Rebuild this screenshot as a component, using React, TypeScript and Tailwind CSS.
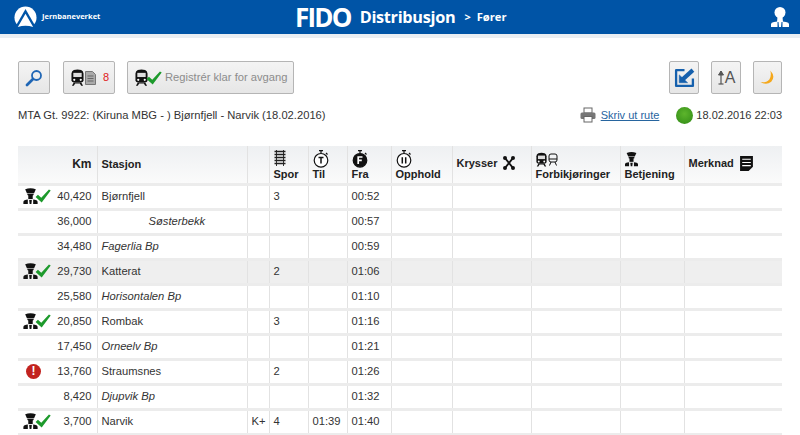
import React from "react";

const Check = ({ className = "" }: { className?: string }) => (
  <svg viewBox="0 0 18 16" className={className}>
    <path d="M0.5 9 L3.2 6.5 L7 10 L15.8 0.5 L17.8 1.8 L7.5 15.5 Z" fill="#1d9a2c" />
  </svg>
);

const Conductor = ({ className = "" }: { className?: string }) => (
  <svg viewBox="0 0 16 18" className={className} fill="#111">
    <path d="M2 1.5 Q8 -1 14 1.5 L12 6 L4 6 Z" />
    <path d="M4.5 6.5 H11.5 V8 Q8 10 4.5 8 Z" />
    <rect x="5.5" y="8" width="5" height="4.5" />
    <path d="M0 18 V15.5 Q0 13.5 3 13.2 L5 13 V18 Z" />
    <path d="M6.5 13.5 H9.5 L9 18 H7 Z" />
    <path d="M16 18 V15.5 Q16 13.5 13 13.2 L11 13 V18 Z" />
  </svg>
);

const Train = ({ className = "", fill = "#111" }: { className?: string; fill?: string }) => (
  <svg viewBox="0 0 14 18" className={className}>
    <path d="M3 1 Q7 -0.5 11 1 Q13.5 2 13.5 5 V12 Q13.5 14 11 14.5 H3 Q0.5 14 0.5 12 V5 Q0.5 2 3 1 Z" fill={fill} />
    <path d="M2.5 4 H11.5 V8.5 H2.5 Z" fill="#ddd" />
    <circle cx="3.5" cy="11.5" r="1.2" fill="#fff" />
    <circle cx="10.5" cy="11.5" r="1.2" fill="#fff" />
    <path d="M3 14.5 L1 18 H3 L4.5 15.5 H9.5 L11 18 H13 L11 14.5 Z" fill={fill} />
  </svg>
);

const Stopwatch = ({ letter, solid = false }: { letter: string; solid?: boolean }) => (
  <svg viewBox="0 0 16 18" className="h-[18px] w-4">
    <path d="M6 0.6 H10 M8 0.6 V3 M13 3 L14.5 4.5" stroke="#111" strokeWidth="1.2" fill="none" />
    <circle cx="8" cy="10.3" r="6.8" fill={solid ? "#111" : "#fff"} stroke="#111" strokeWidth="1.2" />
    {letter === "T" && <path d="M5.5 7.5 H10.5 M8 7.5 V13.5" stroke="#111" strokeWidth="1.5" />}
    {letter === "F" && <path d="M6.2 14 V7 H10.5 M6.2 10.3 H9.8" stroke="#fff" strokeWidth="1.7" fill="none" />}
    {letter === "II" && <path d="M6.3 7.2 V13.4 M9.7 7.2 V13.4" stroke="#111" strokeWidth="1.5" />}
  </svg>
);

const Track = () => (
  <svg viewBox="0 0 12 16" className="h-[16px] w-[12px]">
    <path d="M2.5 0 V16 M9.5 0 V16" stroke="#333" strokeWidth="1" />
    <path d="M0.5 1.5 H11.5 M0.5 4.5 H11.5 M0.5 7.5 H11.5 M0.5 10.5 H11.5 M0.5 13.5 H11.5" stroke="#222" strokeWidth="1.3" />
  </svg>
);

const ConductorCheck = () => (
  <div className="flex items-end">
    <Conductor className="h-[16px] w-[15px]" />
    <Check className="-ml-[3px] mb-[1px] h-[14px] w-[16px]" />
  </div>
);

const Alert = () => (
  <div className="flex h-[15px] w-[15px] items-center justify-center rounded-full bg-[#c2231f] text-[12px] font-bold leading-none text-white">
    !
  </div>
);

function ToolButton({ className = "", children }: { className?: string; children: React.ReactNode }) {
  return (
    <button className={`flex h-[33px] items-center rounded-[2px] border border-[#b5b5b5] bg-gradient-to-b from-[#f4f4f4] to-[#e6e6e6] ${className}`}>
      {children}
    </button>
  );
}

interface Row {
  icon?: "check" | "alert";
  km: string;
  name: string;
  stop?: boolean;
  indent?: boolean;
  k?: string;
  spor?: string;
  til?: string;
  fra: string;
  shaded?: boolean;
}

const rows: Row[] = [
  { icon: "check", km: "40,420", name: "Bjørnfjell", stop: true, spor: "3", fra: "00:52" },
  { km: "36,000", name: "Søsterbekk", indent: true, fra: "00:57" },
  { km: "34,480", name: "Fagerlia Bp", fra: "00:59" },
  { icon: "check", km: "29,730", name: "Katterat", stop: true, spor: "2", fra: "01:06", shaded: true },
  { km: "25,580", name: "Horisontalen Bp", fra: "01:10" },
  { icon: "check", km: "20,850", name: "Rombak", stop: true, spor: "3", fra: "01:16" },
  { km: "17,450", name: "Orneelv Bp", fra: "01:21" },
  { icon: "alert", km: "13,760", name: "Straumsnes", stop: true, spor: "2", fra: "01:26" },
  { km: "8,420", name: "Djupvik Bp", fra: "01:32" },
  { icon: "check", km: "3,700", name: "Narvik", stop: true, k: "K+", spor: "4", til: "01:39", fra: "01:40" },
];

const cell = "border-r border-b-[3px] border-r-[#e2e2e2] border-b-[#ececec] px-[4px] align-middle";
const headCell = "border-r border-b-[3px] border-r-[#e2e2e2] border-b-[#ececec] px-[4px] pt-[4px] text-[11px] font-bold leading-[13px] text-[#222]";

export default function App() {
  return (
    <div className="h-[435px] w-[800px] overflow-hidden bg-white font-['Liberation_Sans',Arial,sans-serif] text-[11.2px] text-[#333]">
      <header className="flex h-[38px] items-center border-b-4 border-b-[#e9eef3] bg-[#0054a6] text-white">
        <div className="ml-[14px] flex w-[281px] items-center gap-[5px]">
          <svg viewBox="0 0 24 24" className="h-[23px] w-[23px]">
            <circle cx="12" cy="12" r="11.5" fill="#fff" />
            <path d="M12 3 L24 24 H0 Z" fill="#0054a6" />
            <path d="M12 8 L20 22 Q12 19 4 22 Z" fill="#fff" />
          </svg>
          <span className="font-['Open_Sans',sans-serif] text-[7.5px] font-bold">Jernbaneverket</span>
        </div>
        <span className="font-['Open_Sans',sans-serif] text-[26px] font-bold leading-none tracking-[-1.8px]">FIDO</span>
        <span className="ml-[9px] font-['Open_Sans',sans-serif] text-[16.3px] font-bold leading-none tracking-[-0.3px]">Distribusjon</span>
        <span className="ml-[9px] font-['Open_Sans',sans-serif] text-[11px] font-bold">&gt;</span>
        <span className="ml-[6px] font-['Open_Sans',sans-serif] text-[11.2px] font-bold">Fører</span>
        <svg viewBox="0 0 18 20" className="ml-auto mr-[11px] h-[20px] w-[18px]" fill="#fff">
          <circle cx="9" cy="5.5" r="5.5" />
          <path d="M6.5 10 H11.5 L12 15 H6 Z" />
          <path d="M0 20 V17 Q0 15.5 3 15 L6.5 14.5 V20 Z" />
          <path d="M7.5 15 H10.5 L10 20 H8 Z" />
          <path d="M18 20 V17 Q18 15.5 15 15 L11.5 14.5 V20 Z" />
        </svg>
      </header>

      <main className="px-[18px]">
        <div className="flex items-center pt-[23px]">
          <ToolButton className="w-[32px] justify-center">
            <svg viewBox="0 0 18 18" className="h-[18px] w-[18px]" fill="none" stroke="#1f66b5">
              <circle cx="11.5" cy="6.5" r="4.5" strokeWidth="1.8" />
              <path d="M8 10 L2 16" strokeWidth="2.8" strokeLinecap="round" />
            </svg>
          </ToolButton>
          <ToolButton className="ml-[13px] w-[52px] pl-[7px]">
            <Train className="h-[17px] w-[13px]" />
            <svg viewBox="0 0 11 14" className="ml-[1px] h-[14px] w-[11px]">
              <path d="M0.5 0.5 H7.5 L10.5 3.5 V13.5 H0.5 Z" fill="#aaa" stroke="#777" />
              <path d="M2.5 5 H8.5 M2.5 7.5 H8.5 M2.5 10 H8.5" stroke="#666" />
            </svg>
            <span className="ml-[7px] text-[11px] text-[#e02020]">8</span>
          </ToolButton>
          <ToolButton className="ml-[12px] w-[167px] pl-[7px]">
            <Train className="h-[17px] w-[13px]" />
            <Check className="-ml-[2px] h-[14px] w-[16px]" />
            <span className="ml-[3px] whitespace-nowrap text-[11.2px] text-[#8c8c8c]">Registrér klar for avgang</span>
          </ToolButton>
          <ToolButton className="ml-auto w-[30px] justify-center">
            <svg viewBox="0 0 20 20" className="h-[21px] w-[21px]" fill="none" stroke="#1560ad">
              <path d="M10 3 H2 V18 H18 V11" strokeWidth="2.2" strokeLinejoin="round" />
              <path d="M18 3 L8 12" strokeWidth="4" />
              <path d="M5 7.5 V15 H13 Z" fill="#1560ad" strokeWidth="0.5" />
            </svg>
          </ToolButton>
          <ToolButton className="ml-[12px] w-[30px] justify-center">
            <svg viewBox="0 0 8 15" className="h-[15px] w-[8px]" fill="none" stroke="#555">
              <path d="M4 1 V14" strokeWidth="1.2" />
              <path d="M1.5 5 L4 1 L6.5 5 Z" fill="#555" />
              <path d="M1.5 14 H6.5" strokeWidth="1.2" />
            </svg>
            <span className="text-[16px] leading-none text-[#555]">A</span>
          </ToolButton>
          <ToolButton className="ml-[12px] w-[29px] justify-center">
            <svg viewBox="0 0 16 16" className="h-[15px] w-[15px]">
              <path d="M11 0.5 Q17 7 12 12.5 Q7 16.5 0.5 13 Q7 13.5 10 10 Q12.5 6 11 0.5 Z" fill="#f5a81c" />
            </svg>
          </ToolButton>
        </div>

        <div className="mt-[12px] flex h-[18px] items-center">
          <span>MTA Gt. 9922: (Kiruna MBG - ) Bjørnfjell - Narvik (18.02.2016)</span>
          <svg viewBox="0 0 16 16" className="ml-auto h-[16px] w-[16px]">
            <rect x="4" y="1" width="8" height="5" fill="#fff" stroke="#666" />
            <rect x="0.5" y="5.5" width="15" height="6.5" rx="1.5" fill="#777" />
            <rect x="4" y="9.5" width="8" height="5.5" fill="#fff" stroke="#666" />
          </svg>
          <a className="ml-[5px] text-[11px] text-[#27659f] underline">Skriv ut rute</a>
          <span className="ml-[17px] h-[17px] w-[17px] rounded-full bg-[radial-gradient(circle_at_50%_40%,#5db52c,#2f8a16)]" />
          <span className="ml-[3px] text-[11px]">18.02.2016 22:03</span>
        </div>

        <table className="mt-[22px] w-[764px] table-fixed border-collapse">
          <colgroup>
            <col className="w-[79px]" />
            <col className="w-[150px]" />
            <col className="w-[22px]" />
            <col className="w-[39px]" />
            <col className="w-[39px]" />
            <col className="w-[44px]" />
            <col className="w-[61px]" />
            <col className="w-[79px]" />
            <col className="w-[89px]" />
            <col className="w-[64px]" />
            <col />
          </colgroup>
          <thead>
            <tr className="h-[38px] bg-gradient-to-b from-[#eef0f2] to-[#fbfbfb] align-top">
              <th className={`${headCell} !px-[5px] !pt-0 !align-middle !text-right !text-[12px]`}>Km</th>
              <th className={`${headCell} !pt-0 !align-middle text-left`}>Stasjon</th>
              <th className={headCell} />
              <th className={`${headCell} text-left`}>
                <Track />
                <div className="mt-[2px]">Spor</div>
              </th>
              <th className={`${headCell} text-left`}>
                <Stopwatch letter="T" />
                <div>Til</div>
              </th>
              <th className={`${headCell} text-left`}>
                <Stopwatch letter="F" solid />
                <div>Fra</div>
              </th>
              <th className={`${headCell} text-left`}>
                <Stopwatch letter="II" />
                <div>Opphold</div>
              </th>
              <th className={`${headCell} text-left`}>
                <div className="flex items-center gap-[6px] pt-[6px]">
                  Krysser
                  <svg viewBox="0 0 12 14" className="h-[14px] w-[12px]" fill="none" stroke="#111" strokeWidth="2">
                    <path d="M2 2 L10 12 M10 2 L2 12" />
                    <circle cx="2" cy="2" r="1" />
                    <circle cx="10" cy="2" r="1" />
                    <circle cx="2" cy="12" r="1" />
                    <circle cx="10" cy="12" r="1" />
                  </svg>
                </div>
              </th>
              <th className={`${headCell} text-left`}>
                <div className="flex h-[18px] items-center">
                  <Train className="h-[15px] w-[11px]" />
                  <svg viewBox="0 0 10 13" className="ml-[1px] h-[13px] w-[10px]" fill="none" stroke="#111">
                    <rect x="1" y="1" width="8" height="8" rx="2" />
                    <path d="M1 6 H9 M3 9 L1.5 12.5 M7 9 L8.5 12.5" />
                  </svg>
                </div>
                <div>Forbikjøringer</div>
              </th>
              <th className={`${headCell} text-left`}>
                <Conductor className="h-[18px] w-[13px]" />
                <div>Betjening</div>
              </th>
              <th className={`${headCell} border-r-0 text-left`}>
                <div className="flex items-center gap-[6px] pt-[6px]">
                  Merknad
                  <svg viewBox="0 0 12 14" className="h-[15px] w-[13px]">
                    <path d="M0 0 H12 V10 L8 14 H0 Z" fill="#111" />
                    <path d="M2 3 H10 M2 6 H10 M2 9 H10" stroke="#fff" />
                  </svg>
                </div>
              </th>
            </tr>
          </thead>
          <tbody>
            {rows.map((r) => (
              <tr key={r.km} className={`h-[25px] ${r.shaded ? "bg-[#efefef]" : ""}`}>
                <td className={`${cell} !pr-[5px]`}>
                  <div className="flex items-center justify-between">
                    <div className="ml-[1px] w-[28px]">
                      {r.icon === "check" && <ConductorCheck />}
                      {r.icon === "alert" && <div className="ml-[3px]"><Alert /></div>}
                    </div>
                    <span>{r.km}</span>
                  </div>
                </td>
                <td className={`${cell} ${r.stop ? "" : "italic"} ${r.indent ? "pl-[51px]" : ""}`}>{r.name}</td>
                <td className={cell}>{r.k}</td>
                <td className={cell}>{r.spor}</td>
                <td className={cell}>{r.til}</td>
                <td className={cell}>{r.fra}</td>
                <td className={cell} />
                <td className={cell} />
                <td className={cell} />
                <td className={cell} />
                <td className={`${cell} border-r-0`} />
              </tr>
            ))}
          </tbody>
        </table>
      </main>
    </div>
  );
}
